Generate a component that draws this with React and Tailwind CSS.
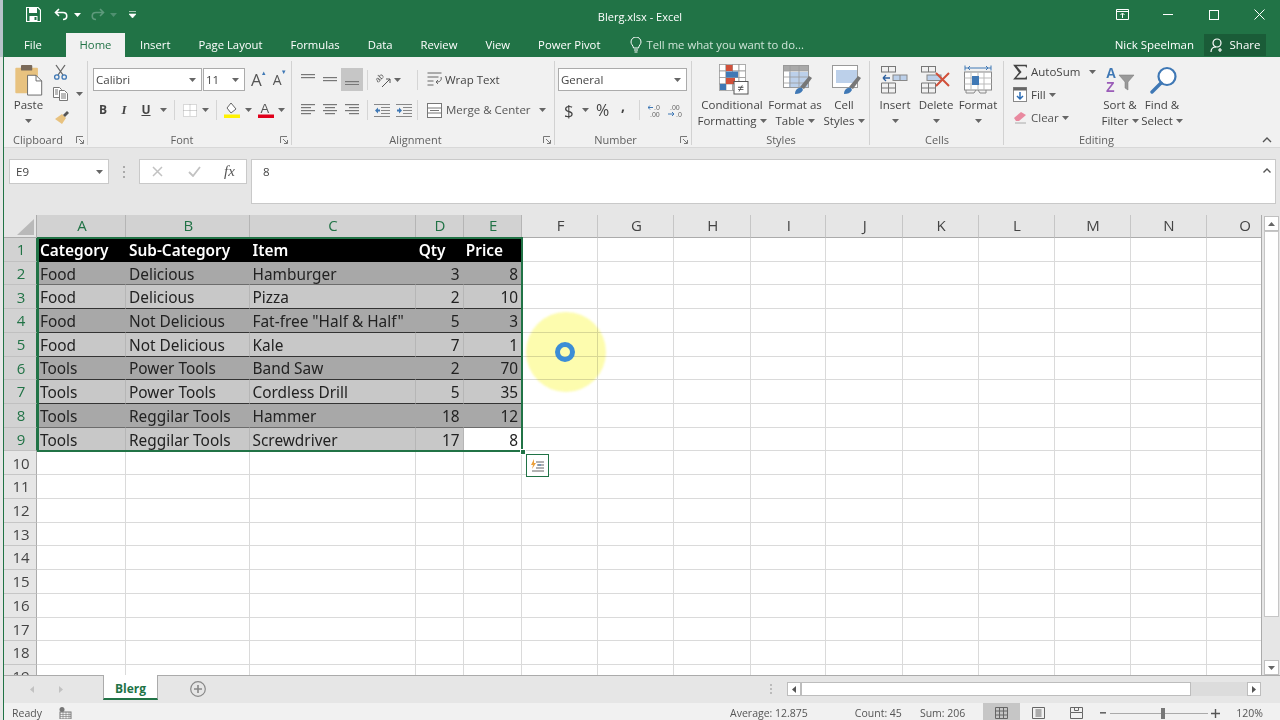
import React from 'react';

const UI = { fontFamily: '"Open Sans","Noto Sans",sans-serif' };

function Caret({ className = '', color = '#666' }) {
  return (
    <svg width="7" height="4" viewBox="0 0 7 4" className={`shrink-0 ${className}`}><path d="M0 0h7L3.500 4z" fill={color} /></svg>
  );
}

function Group({ width, label, launcher, children, last }) {
  return (
    <div className="relative flex flex-col shrink-0 h-full" style={{ width }}>
      <div className="flex-1 min-h-0 flex">{children}</div>
      <div className={`h-[14px] flex items-center justify-center text-[11px] text-[#5f5f5f] ${launcher ? 'pr-[16px]' : ''}`}>{label}</div>
      {launcher && (
        <svg width="8" height="8" viewBox="0 0 8 8" className="absolute right-[4px] bottom-[3px]"><path d="M.5 7V.5H7M3 3l4 4M4 7.500h3.500V4" stroke="#777" fill="none" /></svg>
      )}
      {!last && <div className="absolute right-0 top-[4px] bottom-[2px] w-px bg-[#d2d2d2]" />}
    </div>
  );
}

function LargeBtn({ icon, l1, l2, width, className = '' }) {
  return (
    <div className={`flex flex-col items-center shrink-0 ${className}`} style={{ width }}>
      <div className="h-[31px] flex items-center justify-center shrink-0">{icon}</div>
      <div className="text-[11.500px] leading-[16px] text-[#444] whitespace-nowrap mt-[2px]">{l1}</div>
      <div className="text-[11.500px] leading-[16px] text-[#444] whitespace-nowrap flex items-center gap-[3px] h-[16px]">
        {l2}<Caret />
      </div>
    </div>
  );
}

const Paste = () => (
  <svg width="29" height="32" viewBox="0 0 30 34" className="shrink-0">
    <rect x="1" y="4" width="24" height="27" rx="1" fill="#e8c27f" />
    <rect x="7" y="1" width="12" height="6" rx="1" fill="#7a6a5a" />
    <path d="M14 12h9l6 6v15H14z" fill="#fff" stroke="#666" />
    <path d="M23 12v6h6" fill="none" stroke="#666" />
  </svg>
);
const Scissors = () => (
  <svg width="15" height="16" viewBox="0 0 15 16" fill="none">
    <path d="M3 1l7 10M12 1L5 11" stroke="#666" strokeWidth="1.300" />
    <circle cx="3.800" cy="13" r="2.200" stroke="#3f78b5" strokeWidth="1.300" />
    <circle cx="11.200" cy="13" r="2.200" stroke="#3f78b5" strokeWidth="1.300" />
  </svg>
);
const CopyI = () => (
  <svg width="15" height="14" viewBox="0 0 15 14" fill="none" stroke="#777">
    <path d="M.5.500h6l2 2v8h-8z" fill="#fff" />
    <path d="M6.500 3.500h5l3 3v7h-8z" fill="#fff" />
    <path d="M8 7h5M8 9h5M8 11h5M2 3h3M2 5h3M2 7h3" />
  </svg>
);
const Brush = () => (
  <svg width="17" height="15" viewBox="0 0 17 15">
    <path d="M9 4l4 4-4 6-7-5z" fill="#e8c27f" />
    <path d="M10 5l4-4 2 2-4 4z" fill="#555" />
  </svg>
);

function AlignLines({ kind }) {
  const sets = {
    left: [[0, 14], [0, 10], [0, 14], [0, 10]],
    center: [[0, 14], [2, 10], [0, 14], [2, 10]],
    right: [[0, 14], [4, 10], [0, 14], [4, 10]],
  };
  return (
    <svg width="15" height="12" viewBox="0 0 15 12">
      {sets[kind].map(([x, w], i) => <rect key={i} x={x} y={i * 3} width={w} height="1.200" fill="#777" />)}
    </svg>
  );
}
function VAlign({ y }) {
  return (
    <svg width="15" height="11" viewBox="0 0 15 11">
      <rect x="0" y={y} width="14" height="1.200" fill="#777" />
      <rect x="0" y={y + 3} width="14" height="1.200" fill="#777" />
    </svg>
  );
}
const Indent = ({ dir }) => (
  <svg width="16" height="13" viewBox="0 0 16 13">
    <path d="M0 .5h16M7 3.500h9M7 6.500h9M7 9.500h9M0 12.500h16" stroke="#888" />
    <path d={dir === 'l' ? 'M1 6.500l3-3v2h2v2H4v2z' : 'M6 6.500l-3-3v2H1v2h2v2z'} fill="#3f78b5" />
  </svg>
);
const CondFmt = () => (
  <svg width="30" height="31" viewBox="0 0 30 31" className="ml-[3px]">
    <g fill="#fff" stroke="#999" strokeWidth=".8">
      {[0, 1, 2, 3].map((r) => [0, 1, 2, 3].map((c) => <rect key={`${r}${c}`} x={.5 + c * 6.5} y={.5 + r * 6.5} width="6.500" height="6.500" />))}
    </g>
    <rect x="7" y="1" width="6.500" height="6" fill="#d1503a" />
    <rect x="7" y="7.500" width="12" height="6" fill="#3f78b5" />
    <rect x="7" y="14" width="9" height="6" fill="#d1503a" />
    <rect x="1" y="20" width="6" height="6" fill="#3f78b5" />
    <rect x="15" y="17.500" width="14" height="12.500" fill="#fff" stroke="#555" />
    <text x="18.500" y="27.500" fontSize="11" fill="#444" fontFamily="Liberation Sans">≠</text>
  </svg>
);
const TableI = () => (
  <svg width="30" height="30" viewBox="0 0 30 30" className="ml-[6px]">
    <rect x=".5" y=".5" width="25" height="22" fill="#fff" stroke="#999" />
    <rect x="1" y="1" width="24" height="5" fill="#a9a9a9" />
    <rect x="6" y="7" width="19" height="15" fill="#bcd0ea" />
    <path d="M.5 6h25M.5 12h25M.5 18h25M7 .5v22M16 .5v22" stroke="#999" strokeWidth=".8" fill="none" />
    <path d="M17 22l9-11 3 2-8 11z" fill="#777" />
    <path d="M12 29c0-4 3-7 7-6l1 2c-2 3-4 4-8 4z" fill="#3f78b5" />
  </svg>
);
const CellSt = () => (
  <svg width="30" height="30" viewBox="0 0 30 30" className="ml-[6px]">
    <rect x=".5" y=".5" width="25" height="22" fill="#fff" stroke="#999" />
    <rect x="4" y="5" width="21" height="13" fill="#bcd0ea" />
    <path d="M17 22l9-11 3 2-8 11z" fill="#777" />
    <path d="M12 29c0-4 3-7 7-6l1 2c-2 3-4 4-8 4z" fill="#3f78b5" />
  </svg>
);
const InsertI = () => (
  <svg width="28" height="28" viewBox="0 0 28 28" fill="none">
    <rect x=".5" y=".5" width="14" height="5.500" stroke="#777" />
    <path d="M7.500.5v5.500" stroke="#777" />
    <rect x="12" y="9" width="14" height="5.500" fill="#bcd0ea" stroke="#888" />
    <path d="M19 9v5.500" stroke="#888" />
    <path d="M2 12h7M2 12l3-3M2 12l3 3" stroke="#2c5f9e" strokeWidth="1.300" />
    <path d="M.5 17h14v10H.5zM.5 22h14M7.500 17v10" stroke="#777" />
  </svg>
);
const DeleteI = () => (
  <svg width="30" height="28" viewBox="0 0 30 28" fill="none">
    <rect x=".5" y=".5" width="14" height="5.500" stroke="#777" />
    <path d="M7.500.5v5.500" stroke="#777" />
    <rect x="6" y="9" width="14" height="5.500" fill="#bcd0ea" stroke="#888" />
    <path d="M.5 17h14v10H.5zM.5 22h14M7.500 17v10" stroke="#777" />
    <path d="M15 7l13 13M28 7L15 20" stroke="#d1503a" strokeWidth="2" />
  </svg>
);
const FormatI = () => (
  <svg width="28" height="30" viewBox="0 0 28 30" fill="none">
    <path d="M1 3h26M1 .5v5M27 .5v5" stroke="#3f78b5" />
    <path d="M4 3l2-2M4 3l2 2M24 3l-2-2M24 3l-2 2" stroke="#3f78b5" />
    <rect x=".5" y="7" width="27" height="18" fill="#fff" stroke="#888" />
    <path d="M7 7v18M20 7v18M.5 13h27M.5 19h27M14 7v18" stroke="#bbb" />
    <rect x="8" y="11" width="7" height="9" fill="#3f78b5" />
    <path d="M2 25v3h8l2-3M14 25l2 3h6v-3" stroke="#888" />
  </svg>
);
const Sigma = () => (
  <svg width="16" height="16" viewBox="0 0 15 15" className="shrink-0"><path d="M1 .8h13v3L12.500 2.200H4.500L9 7.500 4 13h8.500l1.500-2v3.500H1L6.500 8z" fill="#444" /></svg>
);
const FillI = () => (
  <svg width="14" height="15" viewBox="0 0 14 15" fill="none" className="shrink-0">
    <rect x=".5" y=".5" width="13" height="14" fill="#fff" stroke="#888" />
    <rect x=".5" y=".5" width="13" height="3" fill="#666" />
    <path d="M7 5v7M4 9l3 3 3-3" stroke="#2c6db5" strokeWidth="1.500" />
  </svg>
);
const Eraser = () => (
  <svg width="14" height="13" viewBox="0 0 14 13" className="shrink-0"><path d="M1 7l7-6 5 3-7 6H3z" fill="#e9899f" /><path d="M2 12h11" stroke="#aaa" /></svg>
);
const SortI = () => (
  <svg width="30" height="28" viewBox="0 0 30 28" className="ml-[2px]">
    <text x="0" y="12" fontSize="14" fontWeight="700" fill="#3f78b5" fontFamily="Liberation Sans">A</text>
    <text x="0" y="26" fontSize="14" fontWeight="700" fill="#9a5cb8" fontFamily="Liberation Sans">Z</text>
    <path d="M13 9h15l-6 7v8l-3-2v-6z" fill="#9a9a9a" stroke="#777" strokeWidth=".5" />
  </svg>
);
const FindI = () => (
  <svg width="28" height="28" viewBox="0 0 28 28" fill="none" className="ml-[4px]">
    <circle cx="17" cy="10.500" r="8.500" stroke="#3f78b5" strokeWidth="2.200" fill="#fff" />
    <path d="M11 17L2 26" stroke="#3f78b5" strokeWidth="3.400" strokeLinecap="round" />
  </svg>
);

const IconBtn = ({ children, className = '' }) => <div className={`flex items-center justify-center shrink-0 ${className}`}>{children}</div>;
const VSep = ({ className = '' }) => <div className={`w-px h-[20px] bg-[#d5d5d5] shrink-0 ${className}`} />;

function TitleBar() {
  return (
    <div className="h-[33px] pb-[4px] flex items-center relative text-white shrink-0">
      <div className="w-[22px]" />
      <svg width="15" height="15" viewBox="0 0 15 15" className="shrink-0"><path d="M.5.5H12L14.500 3v11.500H.5z" fill="none" stroke="#fff" strokeWidth="1.200" /><rect x="3" y="1" width="8" height="5" fill="#fff" /><rect x="3.500" y="9" width="8" height="5.500" fill="#fff" /><rect x="8.500" y="10" width="2" height="3" fill="#217346" /></svg>
      <svg width="15" height="13" viewBox="0 0 15 13" className="ml-[13px] shrink-0"><path d="M5 1L1.500 4.500 5 8M2 4.500h7c5 0 5 7 0 7" fill="none" stroke="#fff" strokeWidth="1.600" /></svg>
      <Caret className="ml-[5px]" color="#fff" />
      <svg width="15" height="13" viewBox="0 0 15 13" className="ml-[9px] shrink-0"><path d="M10 1l3.500 3.500L10 8M13 4.500H6c-5 0-5 7 0 7" fill="none" stroke="#5e9a7c" strokeWidth="1.600" /></svg>
      <Caret className="ml-[5px]" color="#4f9070" />
      <svg width="7" height="7" viewBox="0 0 7 7" className="ml-[12px] shrink-0"><path d="M0 .5h7M0 3h7L3.500 7z" fill="#fff" stroke="#fff" strokeWidth=".6" /></svg>
      <div className="absolute left-[-4px] right-0 top-[2px] text-center text-[11px] leading-[29px]">Blerg.xlsx - Excel</div>
      <div className="ml-auto flex items-center relative z-10">
        <svg width="13" height="11" viewBox="0 0 13 11" fill="none" stroke="#fff"><path d="M.5.500h12v10H.5zM.5 2.500h12M6.500 9V4.500M4.500 6l2-2 2 2" /></svg>
        <svg width="10" height="1" viewBox="0 0 10 1" className="ml-[34px]"><rect width="10" height="1" fill="#fff" /></svg>
        <svg width="10" height="10" viewBox="0 0 10 10" className="ml-[36px]"><rect x=".5" y=".5" width="9" height="9" fill="none" stroke="#fff" /></svg>
        <svg width="11" height="11" viewBox="0 0 11 11" className="ml-[35px] mr-[15px]"><path d="M.5.500l10 10M10.500.500l-10 10" stroke="#fff" /></svg>
      </div>
    </div>
  );
}

function TabsRow() {
  return (
    <div className="h-[24px] flex items-center shrink-0 text-white text-[11.300px]">
      <div className="w-[20px]" />
      <span className="w-[42px]">File</span>
      <div className="h-full w-[59px] bg-[#f1f1f1] text-[#217346] flex items-center justify-center">Home</div>
      <div className="ml-[15px] flex gap-[28px] items-center">
        {['Insert', 'Page Layout', 'Formulas', 'Data', 'Review', 'View', 'Power Pivot'].map((t) => <span key={t} className="whitespace-nowrap">{t}</span>)}
      </div>
      <svg width="12" height="16" viewBox="0 0 12 16" className="ml-[30px] shrink-0" fill="none" stroke="#fff"><path d="M3.500 11C3 8 1 7.500 1 5a5 5 0 0110 0c0 2.500-2 3-2.500 6zM4 13h4M4.500 15h3" /></svg>
      <span className="ml-[4px] text-[#cfe5d8]">Tell me what you want to do...</span>
      <span className="ml-auto whitespace-nowrap text-[11.500px]">Nick Speelman</span>
      <div className="ml-[10px] mr-[14px] h-[22px] w-[62px] bg-[#1a5c38] flex items-center justify-center gap-[5px] text-[11.500px]">
        <svg width="15" height="15" viewBox="0 0 15 15" fill="none" stroke="#fff" strokeWidth="1.200"><circle cx="7" cy="5" r="4" /><path d="M1 14c0-3 2-5 5-5M10 10v4M8 12h4" /></svg>
        Share
      </div>
    </div>
  );
}

function Ribbon() {
  const smallBox = 'bg-white border border-[#ababab] h-[23px] flex items-center shrink-0';
  return (
    <div className="h-[91px] bg-[#f1f1f1] flex shrink-0 text-[#444] border-b border-[#d8d8d8]">
      <Group width={84} label="Clipboard" launcher>
        <div className="w-[49px] pt-[7px] flex flex-col items-center shrink-0">
          <Paste />
          <div className="text-[11.500px] leading-[16px] mt-[1px] text-[#444]">Paste</div>
          <Caret className="mt-[6px]" />
        </div>
        <div className="pt-[7px] flex flex-col gap-[7px]">
          <IconBtn className="h-[16px] w-[15px]"><Scissors /></IconBtn>
          <div className="flex items-center gap-[8px] h-[14px]"><CopyI /><Caret /></div>
          <IconBtn className="h-[15px] w-[17px] mt-[2px]"><Brush /></IconBtn>
        </div>
      </Group>
      <Group width={204} label="Font" launcher>
        <div className="flex flex-col pl-[5px] pt-[11px]">
          <div className="flex items-center">
            <div className={`${smallBox} w-[109px] px-[2px] text-[11.500px] justify-between`}>Calibri<Caret className="mr-[3px]" /></div>
            <div className={`${smallBox} w-[42px] ml-px px-[2px] text-[11.500px] justify-between`}>11<Caret className="mr-[3px]" /></div>
            <span className="ml-[6px] text-[17px] leading-none text-[#555] relative">A<span className="absolute text-[6px] text-[#3f78b5] top-[-1px] right-[-5px]">▲</span></span>
            <span className="ml-[11px] text-[14px] leading-none text-[#555] relative">A<span className="absolute text-[6px] text-[#3f78b5] top-[-4px] right-[-5px]">▼</span></span>
          </div>
          <div className="flex items-center mt-[9px] h-[20px] pl-[4px]">
            <span className="w-[12px] text-[12px] font-bold text-center">B</span>
            <span className="ml-[4px] w-[22px] text-[13px] italic font-bold text-center" style={{ fontFamily: 'Liberation Serif,serif' }}>I</span>
            <span className="ml-[3px] w-[16px] text-[12px] font-bold underline text-center">U</span>
            <Caret className="ml-[6px]" />
            <VSep className="ml-[7px]" />
            <svg width="14" height="13" viewBox="0 0 14 13" className="ml-[8px] shrink-0"><rect x=".5" y=".5" width="13" height="12" fill="#fff" stroke="#bbb" strokeDasharray="1 1" /><path d="M7 .5v12M.5 6.500h13" stroke="#aaa" strokeDasharray="1 1" /></svg>
            <Caret className="ml-[5px]" />
            <VSep className="ml-[7px]" />
            <svg width="16" height="16" viewBox="0 0 16 16" className="ml-[7px] shrink-0"><path d="M7 1l5 6-5 4-4-5z" fill="#fff" stroke="#666" /><rect x="0" y="12.500" width="16" height="3.500" fill="#fff200" /></svg>
            <Caret className="ml-[5px]" />
            <svg width="16" height="16" viewBox="0 0 16 16" className="ml-[6px] shrink-0"><text x="2.500" y="11" fontSize="13" fill="#555" fontFamily="Liberation Sans">A</text><rect x="0" y="12.500" width="16" height="3.500" fill="#e0001b" /></svg>
            <Caret className="ml-[4px]" />
          </div>
        </div>
      </Group>
      <Group width={263} label="Alignment" launcher>
        <div className="flex flex-col pl-[5px] pt-[11px]">
          <div className="flex items-center h-[23px]">
            <IconBtn className="w-[22px] h-[23px]"><VAlign y={0} /></IconBtn>
            <IconBtn className="w-[22px] h-[23px]"><VAlign y={3} /></IconBtn>
            <IconBtn className="w-[22px] h-[23px] bg-[#c6c6c6]"><VAlign y={7} /></IconBtn>
            <VSep className="ml-[4px]" />
            <svg width="17" height="16" viewBox="0 0 17 16" className="ml-[7px] shrink-0 overflow-visible" fill="none"><text x="0" y="0" fontSize="8" fill="#555" fontFamily="Liberation Sans" transform="translate(3 11) rotate(-45)">ab</text><path d="M7 15l8-8M15 7v4M15 7h-4" stroke="#555" /></svg>
            <Caret className="ml-[2px]" />
            <VSep className="ml-[16px]" />
            <svg width="15" height="15" viewBox="0 0 15 15" className="ml-[9px] shrink-0" fill="none" stroke="#666"><path d="M.5 1h14M.5 5h11M.5 9h6M.5 13h6M14 5c1 3-1 5-4 5M11 8l-2 2 2 2" /></svg>
            <span className="text-[11.500px] ml-[3px] whitespace-nowrap text-[#444]">Wrap Text</span>
          </div>
          <div className="flex items-center h-[20px] mt-[9px]">
            <IconBtn className="w-[22px] h-[20px]"><AlignLines kind="left" /></IconBtn>
            <IconBtn className="w-[22px] h-[20px]"><AlignLines kind="center" /></IconBtn>
            <IconBtn className="w-[22px] h-[20px]"><AlignLines kind="right" /></IconBtn>
            <VSep className="ml-[4px]" />
            <IconBtn className="w-[22px] h-[20px] ml-[3px]"><Indent dir="l" /></IconBtn>
            <IconBtn className="w-[22px] h-[20px]"><Indent dir="r" /></IconBtn>
            <VSep className="ml-[2px]" />
            <svg width="15" height="15" viewBox="0 0 15 15" className="ml-[9px] shrink-0" fill="none" stroke="#777"><rect x=".5" y=".5" width="14" height="14" fill="#fff" /><path d="M.5 5h14M.5 10h14M3 7.500h9" /></svg>
            <span className="text-[11.500px] ml-[4px] whitespace-nowrap text-[#555]">Merge &amp; Center</span>
            <Caret className="ml-[8px]" />
          </div>
        </div>
      </Group>
      <Group width={137} label="Number" launcher>
        <div className="flex flex-col pl-[3px] pt-[11px]">
          <div className={`${smallBox} w-[129px] px-[2px] text-[11.500px] justify-between`}>General<Caret className="mr-[3px]" /></div>
          <div className="flex items-center mt-[9px] h-[20px] pl-[6px]">
            <span className="text-[17px] leading-none w-[10px]">$</span>
            <Caret className="ml-[8px]" />
            <span className="text-[16px] leading-none ml-[7px] w-[14px]">%</span>
            <span className="text-[14px] font-bold leading-none ml-[11px] mt-[-9px] w-[4px]">,</span>
            <VSep className="ml-[14px]" />
            <svg width="15" height="13" viewBox="0 0 15 13" className="ml-[8px] shrink-0"><text x="6" y="6" fontSize="7" fill="#666" fontFamily="Liberation Sans">.0</text><text x="2" y="13" fontSize="7" fill="#666" fontFamily="Liberation Sans">.00</text><path d="M0 3.500h5M2 1.500L0 3.500l2 2" stroke="#3f78b5" fill="none" /></svg>
            <svg width="15" height="13" viewBox="0 0 15 13" className="ml-[5px] shrink-0"><text x="2" y="6" fontSize="7" fill="#666" fontFamily="Liberation Sans">.00</text><text x="8" y="13" fontSize="7" fill="#666" fontFamily="Liberation Sans">.0</text><path d="M0 10h6M4 8l2 2-2 2" stroke="#3f78b5" fill="none" /></svg>
          </div>
        </div>
      </Group>
      <Group width={178} label="Styles">
        <div className="flex pt-[7px] pl-[5px]">
          <LargeBtn width={70} icon={<CondFmt />} l1="Conditional" l2="Formatting" />
          <LargeBtn width={52} className="ml-[2px]" icon={<TableI />} l1="Format as" l2="Table" />
          <LargeBtn width={46} icon={<CellSt />} l1="Cell" l2="Styles" />
        </div>
      </Group>
      <Group width={134} label="Cells">
        <div className="flex pt-[7px] pl-[5px]">
          <LargeBtn width={40} icon={<InsertI />} l1="Insert" l2="" />
          <LargeBtn width={42} icon={<DeleteI />} l1="Delete" l2="" />
          <LargeBtn width={42} icon={<FormatI />} l1="Format" l2="" />
        </div>
      </Group>
      <Group width={185} label="Editing" last>
        <div className="flex flex-col pt-[6px] pl-[8px] gap-[6px] w-[98px]">
          <div className="flex items-center h-[17px] gap-[3px] text-[11.500px] whitespace-nowrap"><Sigma />AutoSum<Caret className="ml-[6px]" /></div>
          <div className="flex items-center h-[17px] gap-[4px] text-[11.500px] pl-[1px]"><FillI /><span>Fill</span><Caret className="ml-[-1px]" /></div>
          <div className="flex items-center h-[17px] gap-[4px] text-[11.500px] pl-[1px]"><Eraser /><span className="text-[#555]">Clear</span><Caret className="ml-[-1px]" /></div>
        </div>
        <div className="flex pt-[7px] ml-[-3px]">
          <LargeBtn width={42} icon={<SortI />} l1="Sort &" l2="Filter" />
          <LargeBtn width={42} icon={<FindI />} l1="Find &" l2="Select" />
        </div>
      </Group>
      <div className="flex-1 flex items-end justify-end pb-[4px] pr-[8px]">
        <svg width="10" height="6" viewBox="0 0 10 6" fill="none"><path d="M1 5l4-4 4 4" stroke="#555" strokeWidth="1.400" /></svg>
      </div>
    </div>
  );
}

function FormulaBar() {
  return (
    <div className="h-[67px] bg-[#e6e6e6] flex shrink-0 pt-[11px] pl-[5px] pr-[4px]">
      <div className="w-[100px] h-[25px] bg-white border border-[#c9c9c9] flex items-center justify-between pl-[6px] pr-[5px] text-[11.500px] text-[#444]">E9<Caret color="#666" /></div>
      <div className="flex flex-col gap-[3px] justify-center h-[25px] ml-[14px] mr-[14px]">
        <i className="block w-[2px] h-[2px] bg-[#aaa]" /><i className="block w-[2px] h-[2px] bg-[#aaa]" /><i className="block w-[2px] h-[2px] bg-[#aaa]" />
      </div>
      <div className="w-[108px] h-[25px] bg-white border border-[#c9c9c9] flex items-center">
        <svg width="11" height="11" viewBox="0 0 11 11" className="ml-[12px]"><path d="M1 1l9 9M10 1l-9 9" stroke="#c2c2c2" strokeWidth="1.500" /></svg>
        <svg width="13" height="11" viewBox="0 0 13 11" className="ml-[25px]"><path d="M1 6l4 4 7-9" stroke="#c2c2c2" strokeWidth="1.800" fill="none" /></svg>
        <span className="ml-[23px] text-[15px] italic text-[#555]" style={{ fontFamily: 'Liberation Serif,serif' }}>fx</span>
      </div>
      <div className="ml-[4px] flex-1 h-[45px] bg-white border border-[#c9c9c9] pl-[11px] pr-[4px] pt-[3px] flex justify-between text-[11.500px] text-[#444]">
        <span>8</span>
        <svg width="8" height="5" viewBox="0 0 8 5" fill="none" className="mt-[5px]"><path d="M.5 4.500L4 1l3.500 3.500" stroke="#555" strokeWidth="1.400" /></svg>
      </div>
    </div>
  );
}

const COLS = ['A', 'B', 'C', 'D', 'E', 'F', 'G', 'H', 'I', 'J', 'K', 'L', 'M', 'N', 'O'];
const DATA = [
  ['Category', 'Sub-Category', 'Item', 'Qty', 'Price'],
  ['Food', 'Delicious', 'Hamburger', '3', '8'],
  ['Food', 'Delicious', 'Pizza', '2', '10'],
  ['Food', 'Not Delicious', 'Fat-free "Half & Half"', '5', '3'],
  ['Food', 'Not Delicious', 'Kale', '7', '1'],
  ['Tools', 'Power Tools', 'Band Saw', '2', '70'],
  ['Tools', 'Power Tools', 'Cordless Drill', '5', '35'],
  ['Tools', 'Reggilar Tools', 'Hammer', '18', '12'],
  ['Tools', 'Reggilar Tools', 'Screwdriver', '17', '8'],
];

function Sheet() {
  const rows = Array.from({ length: 19 }, (_, i) => i);
  return (
    <div className="flex-1 min-h-0 flex bg-white overflow-hidden">
      <div className="flex-1 relative overflow-hidden">
        <div className="w-max grid grid-cols-[33px_89px_123.500px_166px_48px_58.500px_76px_76px_76.500px_75.500px_76.500px_76px_76px_76px_76px_76px] grid-rows-[23px_repeat(19,23.720px)]">
          <div className="bg-[#e6e6e6] border-b border-[#ababab] flex items-end justify-end pr-[2px] pb-[2px] border-r">
            <svg width="17" height="16" viewBox="0 0 17 16"><path d="M17 0v16H0z" fill="#b9b9b9" /></svg>
          </div>
          {COLS.map((c, i) => (
            <div key={c} className={`flex items-center justify-center pl-[2px] pb-[2px] text-[15px] border-r border-b ${i < 5 ? 'bg-[#d2d2d2] text-[#217346] border-[#b5b5b5] border-b-[#217346]' : 'bg-[#e6e6e6] text-[#444] border-[#c6c6c6] border-b-[#ababab]'}`}>{c}</div>
          ))}
          {rows.map((r) => (
            <React.Fragment key={r}>
              <div className={`flex items-center justify-center pl-[2px] text-[15px] border-b border-r ${r < 9 ? 'bg-[#d2d2d2] text-[#217346] border-[#c0c0c0] border-r-[#217346]' : 'bg-[#e6e6e6] text-[#444] border-[#c6c6c6] border-r-[#ababab]'}`}>{r + 1}</div>
              {COLS.map((c, ci) => {
                const inData = r < 9 && ci < 5;
                if (!inData) return <div key={c} className="border-r border-b border-[#dadada]" />;
                const text = DATA[r][ci];
                const right = ci >= 3;
                const head = r === 0;
                const active = r === 8 && ci === 4;
                const dark = r % 2 === 1;
                const bg = head ? 'bg-black text-white font-semibold' : active ? 'bg-white text-[#222]' : dark ? 'bg-[#a8a8a8] text-[#222]' : 'bg-[#c8c8c8] text-[#222]';
                const rline = head ? 'border-r-black' : dark ? 'border-r-[#a8a8a8]' : 'border-r-[#b6b6b6]';
                const bline = head ? 'border-b-black' : r === 1 || r === 7 ? 'border-b-[#6c6c6c]' : r === 8 ? 'border-b-transparent' : 'border-b-[#333]';
                return (
                  <div key={c} className={`border-b border-r px-[3px] pt-[2px] flex items-center whitespace-nowrap text-[15.400px] ${right ? 'justify-end' : ''} ${head && ci === 3 ? 'pr-[17px]' : ''} ${head && ci === 4 ? 'pr-[18px]' : ''} ${bg} ${rline} ${bline}`} style={{ fontFamily: '"Noto Sans",sans-serif' }}>{text}</div>
                );
              })}
            </React.Fragment>
          ))}
        </div>
        {/* selection outline over the sheet */}
        <div className="absolute left-[33px] top-[22px] w-[486px] h-[215px] border-2 border-[#217346] pointer-events-none" />
        <div className="absolute left-[516px] top-[234px] w-[6px] h-[6px] bg-[#217346] border border-white" />
        {/* quick analysis */}
        <div className="absolute left-[522px] top-[239px] w-[23px] h-[23px] bg-white border border-[#217346] flex items-center justify-center">
          <svg width="15" height="14" viewBox="0 0 15 14"><path d="M4 0L1 6h2l-1 4 4-6H4z" fill="#eba13c" /><path d="M6 3h8M7 6h7M6 9h8M2 12h12" stroke="#666" /><path d="M8 6h3" stroke="#3f78b5" /></svg>
        </div>
        {/* recording cursor highlight */}
        <div className="absolute left-[522px] top-[97px] w-[80px] h-[80px] rounded-full bg-[#fdfcae] mix-blend-multiply blur-[1px]" />
        <div className="absolute left-[551px] top-[127px] w-[20px] h-[20px] rounded-full border-[5px] border-[#3c8dd6]" />
      </div>
      <div className="w-[19px] shrink-0 bg-[#e6e6e6] flex flex-col items-end pr-px border-l border-[#ababab]">
        <div className="w-[15px] h-[15px] bg-white border border-[#c0c0c0] flex items-center justify-center mt-[1px]"><svg width="7" height="4" viewBox="0 0 7 4"><path d="M3.500 0L7 4H0z" fill="#666" /></svg></div>
        <div className="w-[15px] h-[386px] bg-white border border-[#c6c6c6]" />
        <div className="flex-1" />
        <div className="w-[15px] h-[15px] bg-white border border-[#c0c0c0] flex items-center justify-center"><Caret /></div>
      </div>
    </div>
  );
}

function TabsBar() {
  return (
    <div className="h-[28px] bg-[#e6e6e6] border-t border-[#ababab] flex items-start shrink-0 relative">
      <div className="w-[99px] flex items-center h-[26px] pl-[26px] gap-[25px] shrink-0">
        <svg width="4" height="7" viewBox="0 0 4 7"><path d="M4 0v7L0 3.500z" fill="#c2c2c2" /></svg>
        <svg width="4" height="7" viewBox="0 0 4 7"><path d="M0 0v7l4-3.500z" fill="#c2c2c2" /></svg>
      </div>
      <div className="w-[55px] h-[25px] mt-[-1px] pt-[4px] bg-white border-x border-[#ababab] border-b-2 border-b-[#217346] text-[12px] font-bold text-[#217346] flex items-center justify-center">Blerg</div>
      <svg width="16" height="16" viewBox="0 0 16 16" className="ml-[32px] mt-[5px]" fill="none" stroke="#888"><circle cx="8" cy="8" r="7.300" strokeWidth="1.200" /><path d="M8 4v8M4 8h8" strokeWidth="1.600" /></svg>
      <div className="ml-auto flex items-center h-[26px]">
        <div className="flex flex-col gap-[2px]">
          <i className="block w-[2px] h-[2px] bg-[#bbb]" /><i className="block w-[2px] h-[2px] bg-[#bbb]" /><i className="block w-[2px] h-[2px] bg-[#bbb]" />
        </div>
        <div className="ml-[15px] w-[14px] h-[14px] bg-white border border-[#bdbdbd] flex items-center justify-center"><svg width="4" height="7" viewBox="0 0 4 7"><path d="M4 0v7L0 3.500z" fill="#555" /></svg></div>
        <div className="w-[390px] h-[14px] bg-white border border-[#bdbdbd]" />
        <div className="w-[56px] h-[14px] bg-[#dcdcdc]" />
        <div className="w-[14px] h-[14px] bg-white border border-[#bdbdbd] flex items-center justify-center"><svg width="4" height="7" viewBox="0 0 4 7"><path d="M0 0v7l4-3.500z" fill="#555" /></svg></div>
        <div className="w-[19px]" />
      </div>
    </div>
  );
}

function StatusBar() {
  return (
    <div className="h-[17px] bg-[#f1f1f1] flex items-center shrink-0 text-[10.500px] text-[#555]">
      <span className="ml-[8px] pt-[4px]">Ready</span>
      <svg width="13" height="12" viewBox="0 0 13 12" className="ml-[17px] mt-[3px]" fill="#777"><circle cx="3" cy="2.500" r="2.500" /><rect x="1" y="5" width="11" height="7" fill="none" stroke="#777" /><path d="M1 7.500h11M1 9.500h11M4 5v7M7 5v7M10 5v7" stroke="#777" strokeWidth=".6" /></svg>
      <span className="ml-auto whitespace-nowrap pt-[4px]">Average: 12.875</span>
      <span className="ml-[47px] whitespace-nowrap pt-[4px]">Count: 45</span>
      <span className="ml-[18px] whitespace-nowrap pt-[4px]">Sum: 206</span>
      <div className="ml-[18px] w-[37px] h-full bg-[#c6c6c6] flex items-center justify-center pt-[3px]">
        <svg width="13" height="12" viewBox="0 0 13 12" fill="none" stroke="#666"><path d="M.5.500h12v11H.5zM.5 4h12M.5 8h12M4.500.500v11M8.500.500v11" /></svg>
      </div>
      <svg width="13" height="12" viewBox="0 0 13 12" fill="none" stroke="#666" className="ml-[12px] mt-[3px]"><path d="M.5.500h12v11H.5zM3.500 3h6M3.500 5h6M3.500 7h6M3.500 9h6" /></svg>
      <svg width="13" height="12" viewBox="0 0 13 12" fill="none" stroke="#666" className="ml-[25px] mt-[3px]"><path d="M.5.500h12v5H.5zM.5 5.500v6h12v-6M4.500.500v3h4v-3" /></svg>
      <svg width="6" height="2" viewBox="0 0 6 2" className="ml-[17px] mt-[3px]"><rect width="6" height="1.600" fill="#666" /></svg>
      <div className="ml-[4px] mt-[3px] w-[98px] h-px bg-[#aaa] relative">
        <div className="absolute left-[51px] top-[-5px] w-[4px] h-[11px] bg-[#777]" />
      </div>
      <svg width="9" height="9" viewBox="0 0 9 9" className="ml-[3px] mt-[3px]"><path d="M4.500 0v9M0 4.500h9" stroke="#555" strokeWidth="1.400" /></svg>
      <span className="ml-[16px] mr-[17px] pt-[4px]">120%</span>
    </div>
  );
}

export default function App() {
  return (
    <div className="w-[1280px] h-[720px] overflow-hidden flex bg-[#217346]" style={UI}>
      <div className="w-[3px] bg-[#6f7f88] shrink-0 flex flex-col"><div className="h-[57px] bg-[#b7c3c9]" /><div className="flex-1 bg-[#e8e8e8]" /></div>
      <div className="w-px shrink-0 bg-[#217346]" />
      <div className="flex-1 min-w-0 flex flex-col">
        <TitleBar />
        <TabsRow />
        <Ribbon />
        <FormulaBar />
        <Sheet />
        <TabsBar />
        <StatusBar />
      </div>
    </div>
  );
}
